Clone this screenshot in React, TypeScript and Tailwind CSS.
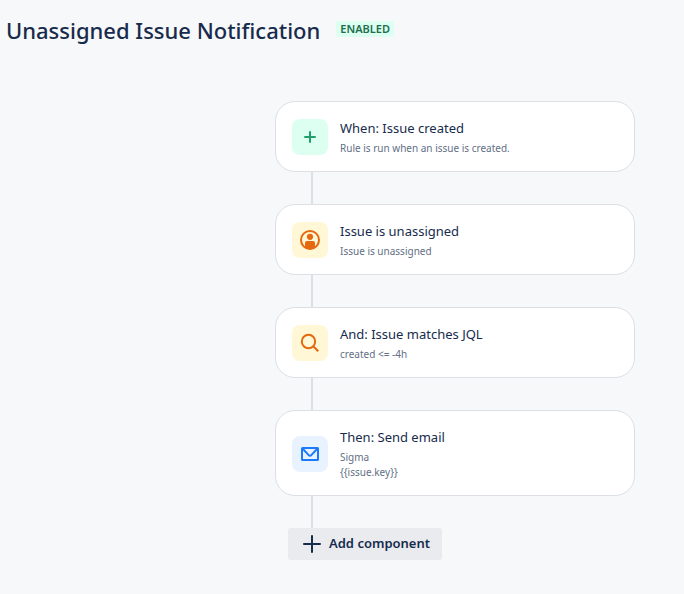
import * as React from "react";

type Step = {
    title: string;
    lines: string[];
    tint: string;
    icon: React.ReactNode;
};

const PlusIcon = () => (
    <svg width="12" height="12" viewBox="0 0 12 12" fill="none" stroke="currentColor" strokeWidth="2" strokeLinecap="round" aria-hidden="true">
        <path d="M6 1v10M1 6h10" />
    </svg>
);

const PersonIcon = () => (
    <svg width="20" height="20" viewBox="0 0 20 20" fill="none" aria-hidden="true">
        <circle cx="10" cy="10" r="9" stroke="currentColor" strokeWidth="2" />
        <circle cx="10" cy="6.800" r="3.100" fill="currentColor" />
        <path d="M5 17.500V13a2 2 0 0 1 2-2h6a2 2 0 0 1 2 2v4.500a9 9 0 0 1-10 0z" fill="currentColor" />
    </svg>
);

const SearchIcon = () => (
    <svg width="20" height="20" viewBox="0 0 20 20" fill="none" stroke="currentColor" strokeWidth="2" aria-hidden="true">
        <circle cx="8.500" cy="8.500" r="6.700" />
        <path d="M13 13l5.300 5.300" />
    </svg>
);

const MailIcon = () => (
    <svg width="18" height="14" viewBox="0 0 18 14" fill="none" stroke="currentColor" strokeWidth="2" aria-hidden="true">
        <rect x="1" y="1" width="16" height="12" rx="0.500" />
        <path d="M1.500 1.500l6.200 6.600a1.800 1.800 0 0 0 2.600 0l6.200-6.600" />
    </svg>
);

const steps: Step[] = [
    {
        title: "When: Issue created",
        lines: ["Rule is run when an issue is created."],
        tint: "bg-[#dcfff1] text-[#22a06b]",
        icon: <PlusIcon />,
    },
    {
        title: "Issue is unassigned",
        lines: ["Issue is unassigned"],
        tint: "bg-[#fff7d6] text-[#e56910]",
        icon: <PersonIcon />,
    },
    {
        title: "And: Issue matches JQL",
        lines: ["created <= -4h"],
        tint: "bg-[#fff7d6] text-[#e56910]",
        icon: <SearchIcon />,
    },
    {
        title: "Then: Send email",
        lines: ["Sigma", "{{issue.key}}"],
        tint: "bg-[#e9f2ff] text-[#1d7afc]",
        icon: <MailIcon />,
    },
];

function StepCard({ step }: { step: Step }) {
    return (
        <li>
            <div className="flex items-center gap-3 rounded-[20px] border border-[#dcdfe4] bg-white px-4 pt-4 pb-[15px]">
                <div className={`flex size-9 shrink-0 items-center justify-center rounded-lg ${step.tint}`}>
                    {step.icon}
                </div>
                <div>
                    <h2 className="mb-[3px] text-[13px] leading-5 text-[#172b4d]">{step.title}</h2>
                    {step.lines.map((line) => (
                        <p key={line} className="text-[10px] leading-[15px] text-[#626f86]">{line}</p>
                    ))}
                </div>
            </div>
            <div className="ml-9 h-8 w-0.5 bg-[#dcdfe4]" />
        </li>
    );
}

export default function App() {
    return (
        <div className="min-h-screen bg-[#f7f8f9] font-['Noto_Sans',sans-serif] text-[#172b4d]">
            <header className="flex items-start gap-4 px-1.5 pt-4">
                <h1 className="text-[22px] leading-7 font-medium">Unassigned Issue Notification</h1>
                <span className="mt-[5px] rounded-[3px] bg-[#dcfff1] px-1 text-[11px] leading-4 font-semibold text-[#216e4e]">ENABLED</span>
            </header>
            <main className="pt-[57px] pr-[49px] pb-8 pl-[275px]">
                <ol>
                    {steps.map((step) => (
                        <StepCard key={step.title} step={step} />
                    ))}
                </ol>
                <button
                    type="button"
                    className="ml-[13px] flex h-8 items-center gap-2 rounded-[3px] bg-[#e9ebee] pr-3 pl-[15px] text-[13px] font-semibold"
                >
                    <svg width="18" height="18" viewBox="0 0 18 18" fill="none" stroke="currentColor" strokeWidth="2" strokeLinecap="round" aria-hidden="true">
                        <path d="M9 1v16M1 9h16" />
                    </svg>
                    Add component
                </button>
            </main>
        </div>
    );
}
